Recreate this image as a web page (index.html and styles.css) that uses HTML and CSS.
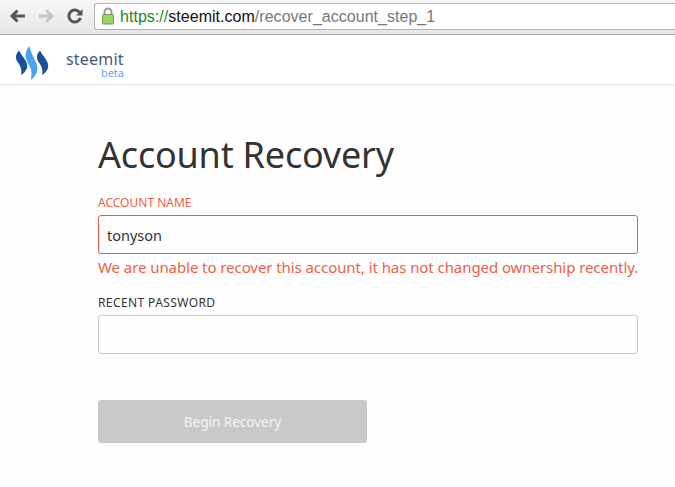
FILE: index.html
```html
<!DOCTYPE html>
<html lang="en">
<head>
<meta charset="utf-8">
<title>Account Recovery</title>
<link rel="stylesheet" href="styles.css">
</head>
<body>
<div class="chrome">
  <div class="nav">
    <svg class="nav-icon" width="20" height="20" viewBox="0 0 20 20"><path d="M18 10H6M10.500 4.500L5 10l5.500 5.500" fill="none" stroke="#555" stroke-width="3"/></svg>
    <svg class="nav-icon" width="20" height="20" viewBox="0 0 20 20"><path d="M3 10h12M10.500 4.500L16 10l-5.500 5.500" fill="none" stroke="#c4c4c4" stroke-width="3"/></svg>
    <svg class="nav-icon" width="20" height="20" viewBox="0 0 20 20"><path d="M15.500 12a6 6 0 1 1-.8-5.500" fill="none" stroke="#555" stroke-width="3"/><path d="M17.500 3v6.500h-6.500z" fill="#555"/></svg>
  </div>
  <div class="omnibox">
    <svg class="lock" width="14" height="18" viewBox="0 0 14 18"><path d="M3.500 8V5a3.500 3.500 0 0 1 7 0v3" fill="none" stroke="#9a9a9a" stroke-width="2"/><rect x="1.500" y="7.500" width="11" height="9.500" rx="1" fill="#9ed36a" stroke="#6f9f45"/></svg>
    <span class="url"><span class="scheme">https://</span><span class="host">steemit.com</span><span class="path">/recover_account_step_1</span></span>
  </div>
</div>
<header class="site-header">
  <svg class="logo" width="36" height="38" viewBox="0 0 36 38">
    <path d="M5 6.500C0 12 2 16 5 20c2 3 3 7 2 11 5-3 8-8 5-13.500C10 13 7 11 5 6.500z" fill="#1a5099"/>
    <path d="M15.500 2c-6 7-4 13-1 18 3 5 4 10 2 16 6-4 8.500-10 6-16.500-2.500-6-6-11-7-17.500z" fill="#4ba2f2"/>
    <path d="M26 6.500C21 12 23 16 26 20c2 3 3 7 2 11 5-3 8-8 5-13.500C31 13 28 11 26 6.500z" fill="#1a5099"/>
  </svg>
  <div class="brand">
    <span class="brand-name">steemit</span>
    <span class="brand-beta">beta</span>
  </div>
</header>
<main class="content">
  <h1 class="title">Account Recovery</h1>
  <form class="form">
    <div class="field field-error">
      <label class="label" for="account">ACCOUNT NAME</label>
      <input class="input" id="account" type="text" value="tonyson">
      <p class="error">We are unable to recover this account, it has not changed ownership recently.</p>
    </div>
    <div class="field">
      <label class="label label-wide" for="password">RECENT PASSWORD</label>
      <input class="input" id="password" type="password">
    </div>
    <button class="button" type="button" disabled>Begin Recovery</button>
  </form>
</main>
</body>
</html>
```

FILE: styles.css
```css
* { box-sizing: border-box; }
html, body { margin: 0; padding: 0; }
body {
  width: 675px;
  height: 487px;
  overflow: hidden;
  background: #fefefe;
  font-family: "Noto Sans", "Open Sans", sans-serif;
  color: #333;
}
.chrome {
  height: 35px;
  display: flex;
  align-items: flex-start;
  padding-top: 3px;
  background: linear-gradient(#f7f7f7, #e6e6e6);
  border-bottom: 1px solid #a8a8a8;
}
.nav {
  width: 94px;
  display: flex;
  gap: 9px;
  padding: 3px 0 0 7px;
}
.nav-icon { display: block; }
.omnibox {
  flex: 1;
  height: 27px;
  display: flex;
  align-items: center;
  gap: 5px;
  padding-left: 6px;
  background: #fff;
  border: 1px solid #b4b4b4;
  border-right: 0;
  border-radius: 3px 0 0 3px;
}
.lock { display: block; margin-top: -1px; }
.url {
  font-family: "Liberation Sans", sans-serif;
  font-size: 16px;
  letter-spacing: 0.03px;
  white-space: nowrap;
}
.scheme { color: #1a8a1a; }
.host { color: #111; }
.path { color: #777; }
.site-header {
  height: 50px;
  display: flex;
  align-items: center;
  padding-left: 14px;
  background: #fff;
  border-bottom: 1px solid #e8e8e8;
}
.logo { display: block; margin-top: 7px; }
.brand {
  margin-left: 16px;
  margin-top: 9px;
  width: 58px;
  display: flex;
  flex-direction: column;
  line-height: 1;
}
.brand-name {
  font-size: 16px;
  line-height: 17px;
  color: #455a7f;
  letter-spacing: 0.2px;
}
.brand-beta {
  font-size: 11px;
  line-height: 10px;
  color: #6ba6f2;
  text-align: right;
}
.content {
  padding: 47px 0 0 98px;
  width: 638px;
}
.title {
  margin: 0;
  font-size: 36px;
  line-height: 46px;
  font-weight: 400;
  color: #333;
  letter-spacing: -0.2px;
}
.form { margin-top: 17px; }
.field { margin-bottom: 18px; }
.label {
  display: block;
  font-size: 12px;
  line-height: 15px;
  color: #333;
}
.label-wide { letter-spacing: 0.4px; }
.input {
  display: block;
  width: 100%;
  height: 39px;
  margin-top: 5px;
  padding: 0 8px;
  font-family: inherit;
  font-size: 14.5px;
  color: #333;
  background: #fefefe;
  border: 1px solid #cacaca;
  border-radius: 3px;
  outline: 0;
}
.field-error .label { color: #ee6049; }
.field-error .input { border-color: #ec5840; }
.error {
  margin: 4px 0 0;
  font-size: 15px;
  letter-spacing: -0.07px;
  line-height: 19px;
  color: #ee6049;
  white-space: nowrap;
}
.button {
  display: block;
  width: 269px;
  height: 43px;
  margin-top: 46px;
  padding: 0;
  font-family: inherit;
  font-size: 13.5px;
  color: #f4f4f4;
  background: #c9c9c9;
  border: 0;
  border-radius: 3px;
}
```
